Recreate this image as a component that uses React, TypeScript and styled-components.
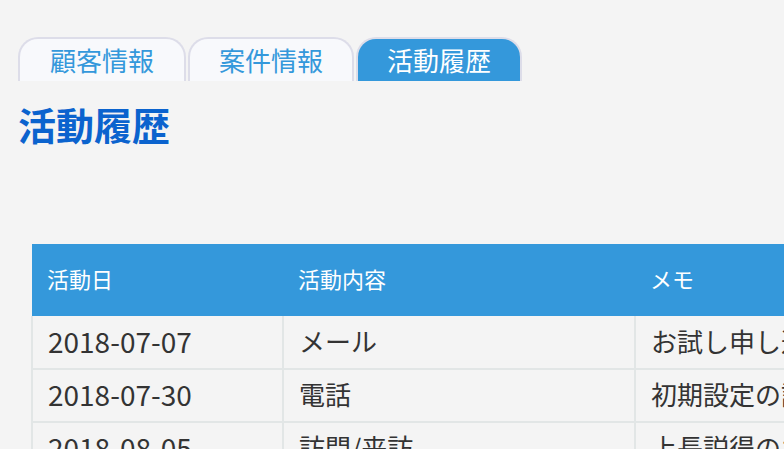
import React, { useState } from 'react';
import styled, { createGlobalStyle } from 'styled-components';

const GlobalStyle = createGlobalStyle`
  html, body {
    margin: 0;
    padding: 0;
    overflow: hidden;
    background: #f4f4f4;
  }

  body {
    font-family: 'Noto Sans CJK JP', 'Noto Sans', sans-serif;
    color: #333;
  }
`;

type Activity = {
  date: string;
  kind: string;
  memo: string;
};

const TABS = ['顧客情報', '案件情報', '活動履歴'];

const ACTIVITIES: Activity[] = [
  { date: '2018-07-07', kind: 'メール', memo: 'お試し申し込み受付' },
  { date: '2018-07-30', kind: '電話', memo: '初期設定の説明' },
  { date: '2018-08-05', kind: '訪問/来訪', memo: '上長説得のための資料説明' }
];

const App: React.FC = () => {
  const [activeTab, setActiveTab] = useState(2);

  return (
    <Page>
      <GlobalStyle />
      <TabBar>
        {TABS.map((label, index) => (
          <Tab
            key={label}
            $active={index === activeTab}
            onClick={() => setActiveTab(index)}
          >
            {label}
          </Tab>
        ))}
      </TabBar>
      <Title>{TABS[activeTab]}</Title>
      <HistoryTable>
        <colgroup>
          <col style={{ width: 251 }} />
          <col style={{ width: 352 }} />
          <col style={{ width: 420 }} />
        </colgroup>
        <thead>
          <tr>
            <HeadCell>活動日</HeadCell>
            <HeadCell>活動内容</HeadCell>
            <HeadCell>メモ</HeadCell>
          </tr>
        </thead>
        <tbody>
          {ACTIVITIES.map((item) => (
            <tr key={item.date}>
              <Cell $numeric>{item.date}</Cell>
              <Cell>{item.kind}</Cell>
              <Cell>{item.memo}</Cell>
            </tr>
          ))}
        </tbody>
      </HistoryTable>
    </Page>
  );
};

export default App;

const Page = styled.div`
  padding: 37px 0 0 18px;
  width: 1200px;
`;

const TabBar = styled.div`
  display: flex;
  gap: 2px;
  align-items: flex-end;
`;

const Tab = styled.button<{ $active: boolean }>`
  box-sizing: border-box;
  height: 44px;
  width: 168px;
  padding: 0;
  border: 2px solid #dddde9;
  border-bottom: 0;
  border-radius: 20px 20px 0 0;
  background: ${({ $active }) => ($active ? '#3498db' : '#f8f9fc')};
  color: ${({ $active }) => ($active ? '#fff' : '#3498db')};
  font-family: inherit;
  font-size: 26px;
  line-height: 40px;
  cursor: pointer;

  &:nth-child(n + 2) {
    width: 166px;
  }
`;

const Title = styled.h1`
  margin: 18px 0 0 0;
  font-size: 38px;
  font-weight: 700;
  line-height: 50px;
  color: #0b63ce;
`;

const HistoryTable = styled.table`
  margin: 95px 0 0 13px;
  border-collapse: collapse;
  table-layout: fixed;
`;

const HeadCell = styled.th`
  box-sizing: border-box;
  height: 72px;
  padding: 0 15px 5px;
  background: #3498db;
  color: #fff;
  font-size: 22px;
  font-weight: 400;
  text-align: left;
  border: 0;
`;

const Cell = styled.td<{ $numeric?: boolean }>`
  box-sizing: border-box;
  height: 53px;
  padding: 0 15px 3px;
  border: 2px solid #e2e6e6;
  border-top: 0;
  font-size: ${({ $numeric }) => ($numeric ? '28px' : '26px')};
  line-height: 46px;
  white-space: nowrap;
  overflow: hidden;
`;
